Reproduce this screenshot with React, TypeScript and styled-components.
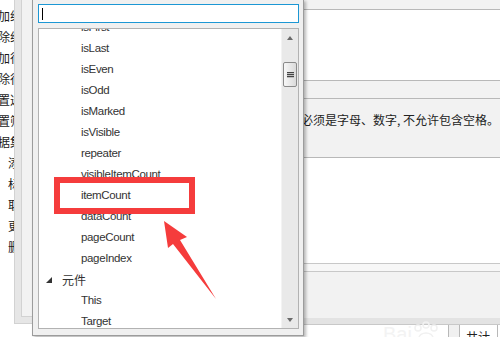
import React from "react";
import styled, { createGlobalStyle } from "styled-components";

const GlobalStyle = createGlobalStyle`
  html, body {
    margin: 0;
    padding: 0;
    background: #fff;
  }
  body {
    font-family: "Liberation Sans", "Noto Sans CJK SC", sans-serif;
  }
`;

const Page = styled.div`
  position: relative;
  width: 500px;
  height: 337px;
  overflow: hidden;
  display: flex;
  background: #fff;
`;

const LeftStrip = styled.div`
  width: 14px;
  flex: none;
  overflow: hidden;
  padding-top: 5px;
`;

const StripItem = styled.div<{ $indent?: number }>`
  height: 21px;
  line-height: 21px;
  font-family: "Noto Sans CJK SC", sans-serif;
  font-size: 12px;
  color: #1a1a1a;
  white-space: nowrap;
  padding-left: ${(p) => p.$indent ?? 0}px;
  text-indent: -2px;
`;

const FrameOuter = styled.div`
  width: 18px;
  height: 324px;
  flex: none;
  display: flex;
  padding-left: 6px;
  box-sizing: border-box;
  background: #e6e6e6;
  border-left: 1px solid #d2d2d2;
  border-bottom: 1px solid #d2d2d2;
`;

const FrameInner = styled.div`
  flex: 1;
  height: 316px;
  background: #f2f2f2;
  border-left: 1px solid #d2d2d2;
  border-bottom: 1px solid #d2d2d2;
`;

const Main = styled.div`
  flex: 1;
  display: flex;
  flex-direction: column;
`;

const Band = styled.div<{ $h: number; $bg: string; $line?: string }>`
  height: ${(p) => p.$h}px;
  flex: none;
  background: ${(p) => p.$bg};
  border-bottom: ${(p) => (p.$line ? `1px solid ${p.$line}` : "none")};
`;

const HintBand = styled(Band)`
  padding: 14px 0 0 269px;
  box-sizing: content-box;
  height: 44px;
  font-family: "Noto Sans CJK SC", sans-serif;
  font-size: 12px;
  line-height: 14px;
  color: #222;
  white-space: nowrap;
`;

const BottomBar = styled.div`
  flex: 1;
  display: flex;
  justify-content: flex-end;
  padding-right: 2px;
`;

const TabStub = styled.div`
  width: 10px;
  background: #f0f0f0;
  border-left: 1px solid #b8b8b8;
  border-right: 1px solid #b8b8b8;
`;

const TabLabel = styled.div`
  width: 38px;
  border-right: 1px solid #b8b8b8;
  font-family: "Noto Sans CJK SC", sans-serif;
  font-size: 12px;
  line-height: 14px;
  padding: 5px 0 0 6px;
  box-sizing: border-box;
  color: #222;
`;

const Popup = styled.div`
  position: absolute;
  left: 32px;
  top: -1px;
  width: 272px;
  height: 337px;
  box-sizing: border-box;
  background: #f0f0f0;
  border: 1px solid #9c9c9c;
  box-shadow: 2px 2px 3px rgba(0, 0, 0, 0.28);
  padding: 4px 4px 0 5px;
  display: flex;
  flex-direction: column;
`;

const SearchInput = styled.div`
  height: 19px;
  box-sizing: border-box;
  background: #fff;
  border: 1px solid #1c97d4;
  padding: 3px 0 0 3px;
`;

const Caret = styled.div`
  width: 1px;
  height: 12px;
  background: #000;
`;

const ListBox = styled.div`
  margin-top: 5px;
  height: 301px;
  box-sizing: border-box;
  background: #fff;
  border: 1px solid #b2b2b2;
  display: flex;
  overflow: hidden;
`;

const ListView = styled.div`
  flex: 1;
  overflow: hidden;
`;

const ItemList = styled.div`
  margin-top: -12px;
`;

const Item = styled.div`
  height: 21px;
  line-height: 21px;
  padding-left: 42px;
  font-size: 11.5px;
  letter-spacing: -0.35px;
  color: #333;
  white-space: nowrap;
`;

const GroupItem = styled.div`
  height: 21px;
  display: flex;
  align-items: center;
  gap: 10px;
  padding-left: 7px;
  font-family: "Noto Sans CJK SC", sans-serif;
  font-size: 12px;
  color: #333;
`;

const Caret45 = styled.span`
  width: 0;
  height: 0;
  border-left: 6px solid transparent;
  border-bottom: 6px solid #333;
`;

const Scrollbar = styled.div`
  width: 16px;
  flex: none;
  background: #e9e9e9;
  border-left: 1px solid #f3f3f3;
  display: flex;
  flex-direction: column;
  align-items: center;
`;

const ArrowBtn = styled.div`
  height: 17px;
  width: 100%;
  display: flex;
  align-items: center;
  justify-content: center;
`;

const ArrowUp = styled.span`
  width: 0;
  height: 0;
  border-left: 3px solid transparent;
  border-right: 3px solid transparent;
  border-bottom: 4px solid #6a6a6a;
`;

const ArrowDown = styled.span`
  width: 0;
  height: 0;
  border-left: 3px solid transparent;
  border-right: 3px solid transparent;
  border-top: 4px solid #6a6a6a;
`;

const Track = styled.div`
  flex: 1;
  width: 100%;
  display: flex;
  justify-content: center;
`;

const Thumb = styled.div`
  margin-top: 16px;
  width: 14px;
  height: 25px;
  box-sizing: border-box;
  border: 1px solid #8a8a8a;
  border-radius: 2px;
  background: linear-gradient(to right, #f7f7f7, #dadada);
  display: flex;
  flex-direction: column;
  align-items: center;
  justify-content: center;
  gap: 1px;
`;

const Grip = styled.span`
  width: 7px;
  height: 1px;
  background: #444;
  box-shadow: 0 1px 0 #bdbdbd;
`;

const RedBox = styled.div`
  position: absolute;
  left: 54px;
  top: 177px;
  width: 141px;
  height: 37px;
  box-sizing: border-box;
  border: 6px solid #f53c3c;
`;

const Overlay = styled.svg`
  position: absolute;
  left: 0;
  top: 0;
  pointer-events: none;
`;

const items = [
  "isFirst",
  "isLast",
  "isEven",
  "isOdd",
  "isMarked",
  "isVisible",
  "repeater",
  "visibleItemCount",
  "itemCount",
  "dataCount",
  "pageCount",
  "pageIndex",
];

const leftItems: [string, number][] = [
  ["加组件", 0],
  ["除组件", 0],
  ["加行", 0],
  ["除行", 0],
  ["置选中", 0],
  ["置筛选", 0],
  ["据集", 0],
  ["添加", 10],
  ["标记", 10],
  ["取消", 10],
  ["更新", 10],
  ["删除", 10],
];

const App: React.FC = () => {
  return (
    <Page>
      <GlobalStyle />
      <LeftStrip>
        {leftItems.map(([t, indent], i) => (
          <StripItem key={i} $indent={indent}>
            {t}
          </StripItem>
        ))}
      </LeftStrip>
      <FrameOuter>
        <FrameInner />
      </FrameOuter>
      <Main>
        <Band $h={9} $bg="#f2f2f2" $line="#b8b8b8" />
        <Band $h={70} $bg="#fff" $line="#b8b8b8" />
        <Band $h={17} $bg="#f2f2f2" $line="#b8b8b8" />
        <HintBand $h={44} $bg="#f2f2f2" $line="#b8b8b8">
          必须是字母、数字, 不允许包含空格。
        </HintBand>
        <Band $h={105} $bg="#fff" $line="#c8c8c8" />
        <Band $h={7} $bg="#f7f7f7" $line="#c8c8c8" />
        <Band $h={46} $bg="#f2f2f2" />
        <Band $h={6} $bg="#e3e3e3" $line="#c8c8c8" />
        <BottomBar>
          <TabStub />
          <TabLabel>共计</TabLabel>
        </BottomBar>
      </Main>

      <Overlay width="500" height="337" viewBox="0 0 500 337">
        <g fill="none" stroke="#f1f1f1" strokeWidth="1.5">
          <text x="383" y="341" fontSize="20" fill="#f3f3f3" stroke="none" fontFamily="Liberation Sans">
            Bai
          </text>
          <circle cx="418" cy="328" r="3" />
          <circle cx="426" cy="325" r="3" />
          <circle cx="434" cy="328" r="3" />
          <ellipse cx="426" cy="338" rx="7" ry="5" />
        </g>
      </Overlay>

      <Popup>
        <SearchInput>
          <Caret />
        </SearchInput>
        <ListBox>
          <ListView>
            <ItemList>
              {items.map((t) => (
                <Item key={t}>{t}</Item>
              ))}
              <GroupItem>
                <Caret45 />
                元件
              </GroupItem>
              <Item>This</Item>
              <Item>Target</Item>
            </ItemList>
          </ListView>
          <Scrollbar>
            <ArrowBtn>
              <ArrowUp />
            </ArrowBtn>
            <Track>
              <Thumb>
                <Grip />
                <Grip />
                <Grip />
              </Thumb>
            </Track>
            <ArrowBtn>
              <ArrowDown />
            </ArrowBtn>
          </Scrollbar>
        </ListBox>
      </Popup>

      <RedBox />
      <Overlay width="500" height="337" viewBox="0 0 500 337">
        <polygon
          points="164,221 187,237 180,240 216,299 173,244 168,248"
          fill="#f53c3c"
        />
      </Overlay>
    </Page>
  );
};

export default App;
